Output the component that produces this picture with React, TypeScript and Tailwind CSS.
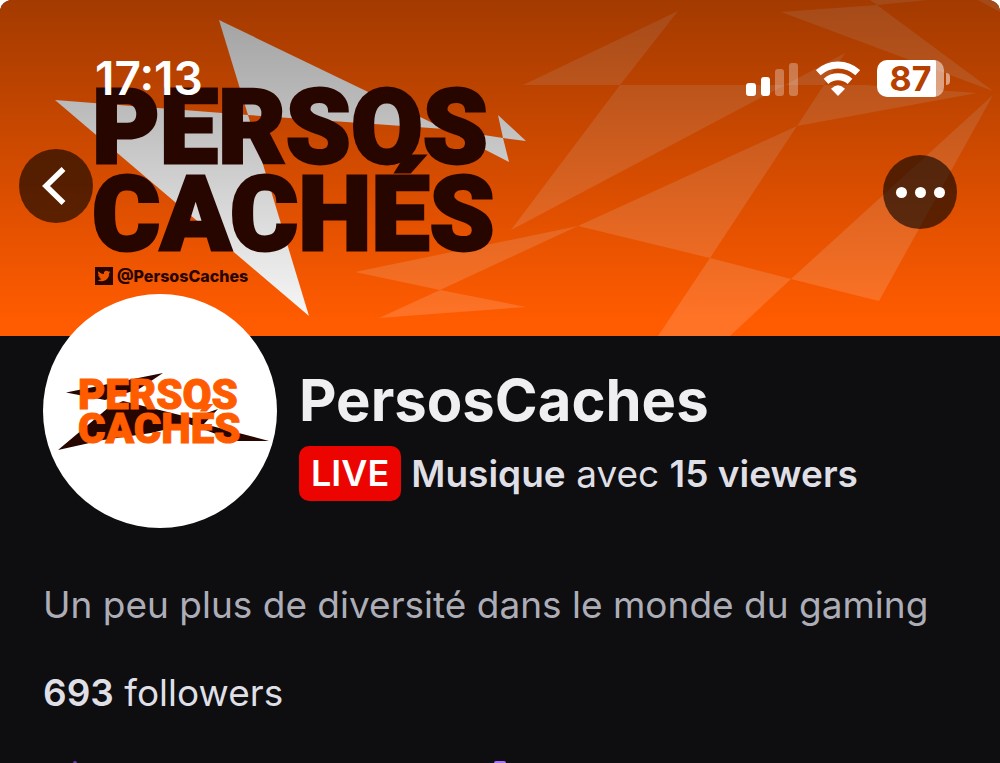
import React from "react";

const INK = "#280600";

function Facets() {
  return (
    <g fill="#ffffff" fillOpacity="0.15">
      <path d="M523 85 678 11 620 85Z" />
      <path d="M620 85H785L511 230Z" />
      <path d="M785 85 845 53 824 85Z" />
      <path d="M824 85H865L977 93 797 126Z" />
      <path d="M797 126 710 258 578 226Z" />
      <path d="M710 258 791 279 730 336H658Z" />
      <path d="M791 279 993 95 879 301Z" />
      <path d="M781 12 877 5 993 91Z" />
      <path d="M870 0H927L877 5Z" />
      <path d="M978 0H1000V12Z" />
      <path d="M355 272 578 226 440 290Z" />
      <path d="M440 290 526 307 379 318Z" />
    </g>
  );
}

function BannerArt() {
  return (
    <svg
      className="absolute inset-0 h-full w-full"
      viewBox="0 0 1000 336"
      preserveAspectRatio="xMidYMid slice"
      role="img"
      aria-label="Persos Cachés"
    >
      <defs>
        <linearGradient id="shade" x1="0" y1="0" x2="0" y2="1">
          <stop offset="0" stopColor="#000000" stopOpacity="0.36" />
          <stop offset="0.3" stopColor="#000000" stopOpacity="0.25" />
          <stop offset="0.95" stopColor="#000000" stopOpacity="0" />
        </linearGradient>
      </defs>
      <rect width="1000" height="336" fill="#ff5b00" />
      <Facets />
      <g fill="#f7f7f7">
        <path d="M219 20 445 129 248 115Z" />
        <path d="M55 100 248 115 309 316Z" />
        <path d="M445 129 503 138 509 162Z" />
        <path d="M498 115 526 141 503 138Z" />
      </g>
      <rect width="1000" height="336" fill="url(#shade)" />
      <g
        fill={INK}
        stroke={INK}
        strokeWidth="3"
        className="font-['Roboto',sans-serif] text-[104px] font-black"
      >
        <text x="92" y="163">PERSOS</text>
        <text x="92" y="250">CACHÉS</text>
      </g>
      <rect x="95" y="267" width="18" height="18" fill={INK} />
      <path
        transform="translate(97.500 269.500) scale(0.54)"
        fill="#ee5500"
        d="M23.953 4.57a10 10 0 01-2.825.775 4.958 4.958 0 002.163-2.723c-.951.555-2.005.959-3.127 1.184a4.92 4.92 0 00-8.384 4.482C7.69 8.095 4.067 6.13 1.64 3.162a4.822 4.822 0 00-.666 2.475c0 1.71.87 3.213 2.188 4.096a4.904 4.904 0 01-2.228-.616v.06a4.923 4.923 0 003.946 4.827 4.996 4.996 0 01-2.212.085 4.936 4.936 0 004.604 3.417 9.867 9.867 0 01-6.102 2.105c-.39 0-.779-.023-1.17-.067a13.995 13.995 0 007.557 2.209c9.053 0 13.998-7.496 13.998-13.985 0-.21 0-.42-.015-.63A9.935 9.935 0 0024 4.59z"
      />
      <text x="117" y="282" fill={INK} className="font-['Inter',sans-serif] text-[16px] font-extrabold">
        @PersosCaches
      </text>
    </svg>
  );
}

function StatusBar() {
  return (
    <div className="relative flex h-[37px] items-center justify-between pr-[50px] pl-[95px] text-white">
      <time className="text-[46px] leading-[37px] font-semibold">17:13</time>
      <div className="flex items-center gap-[17px]">
        <svg className="h-[37px] w-[53px]" viewBox="0 0 53 37" fill="currentColor" role="img" aria-label="Signal">
          <rect x="0" y="23" width="10" height="13" rx="3" />
          <rect x="15" y="17" width="9" height="19" rx="3" />
          <rect x="29" y="9" width="9" height="27" rx="3" opacity="0.3" />
          <rect x="43" y="3" width="9" height="33" rx="3" opacity="0.3" />
        </svg>
        <svg className="h-[37px] w-[44px]" viewBox="0 0 44 37" fill="none" stroke="currentColor" role="img" aria-label="Wi-Fi">
          <path d="M2.200 12.700A29 29 0 0 1 41.800 12.700" strokeWidth="7" />
          <path d="M10 21.300A18 18 0 0 1 34 21.300" strokeWidth="7" />
          <path d="M22 36 15 28.800Q22 21.500 29 28.800Z" fill="currentColor" stroke="none" />
        </svg>
        <div className="flex items-center gap-0.5">
          <div className="flex h-[37px] w-[67px] items-center justify-center rounded-[10px] bg-linear-to-r from-white from-88% to-white/50 to-88% text-[34px] leading-[37px] font-bold text-[#b54000]">
            87
          </div>
          <span className="h-3 w-1 rounded-r-full bg-white/50" />
        </div>
      </div>
    </div>
  );
}

function BannerControls() {
  return (
    <div className="relative flex items-start justify-between pr-[43px] pl-[19px]">
      <button aria-label="Retour" className="flex size-[74px] items-center justify-center rounded-full bg-black/60">
        <svg className="size-[74px]" viewBox="0 0 74 74" fill="none" stroke="white" strokeWidth="5.500">
          <path d="M44.500 20 27 37 44.500 54" />
        </svg>
      </button>
      <button
        aria-label="Plus d'options"
        className="mt-1.5 flex size-[74px] items-center justify-center gap-2 rounded-full bg-black/60"
      >
        <span className="size-[11px] rounded-full bg-white" />
        <span className="size-[11px] rounded-full bg-white" />
        <span className="size-[11px] rounded-full bg-white" />
      </button>
    </div>
  );
}

function Avatar() {
  return (
    <svg
      className="relative -mt-[42px] size-[234px] shrink-0 rounded-full bg-white"
      viewBox="0 0 234 234"
      role="img"
      aria-label="Avatar de PersosCaches"
    >
      <g fill={INK}>
        <path d="M23 98.500 120 79 96 95 62 106Z" />
        <path d="M15 156 65 114 80 107 149 124 175 115 161 130 226 147 192 147 146 130 108 139 60 146Z" />
      </g>
      <g
        fill="#ff5c00"
        stroke="#ff5c00"
        strokeWidth="1"
        className="font-['Roboto',sans-serif] text-[42px] font-black"
      >
        <text x="35" y="115">PERSOS</text>
        <text x="35" y="149">CACHÉS</text>
      </g>
    </svg>
  );
}

export default function App() {
  return (
    <div className="bg-white">
      <main className="flex min-h-screen flex-col overflow-hidden rounded-t-xl bg-[#0e0e10] font-['Inter',sans-serif] text-[#dfdfe5]">
        <header className="relative flex h-[336px] shrink-0 flex-col gap-[52px] pt-[60px]">
          <BannerArt />
          <StatusBar />
          <BannerControls />
        </header>

        <section className="flex items-start gap-[22px] pl-[43px]">
          <Avatar />
          <div className="flex flex-col gap-2.5 pt-[28px]">
            <h1 className="text-[58px] leading-[72px] font-bold text-[#efeff1]">PersosCaches</h1>
            <p className="flex items-center gap-2.5 text-[37px] leading-[55px] whitespace-nowrap">
              <span className="rounded-[10px] bg-[#eb0400] px-3 text-[36px] font-semibold text-white">LIVE</span>
              <span>
                <strong className="font-semibold">Musique</strong> avec{" "}
                <strong className="font-semibold">15 viewers</strong>
              </span>
            </p>
          </div>
        </section>

        <section className="flex flex-col gap-10 px-[43px] pt-[53px] text-[37px] leading-[48px]">
          <p className="text-[#adadb8]">Un peu plus de diversité dans le monde du gaming</p>
          <p>
            <strong className="font-semibold">693</strong> followers
          </p>
        </section>

        <div aria-hidden="true" className="mt-auto flex h-0.5 shrink-0 items-start pl-[73px]">
          <span className="h-0.5 w-1 rounded-t-full bg-[#6441a5]" />
          <span className="ml-[417px] h-0.5 w-3 rounded-t-full bg-[#a970ff]" />
        </div>
      </main>
    </div>
  );
}
